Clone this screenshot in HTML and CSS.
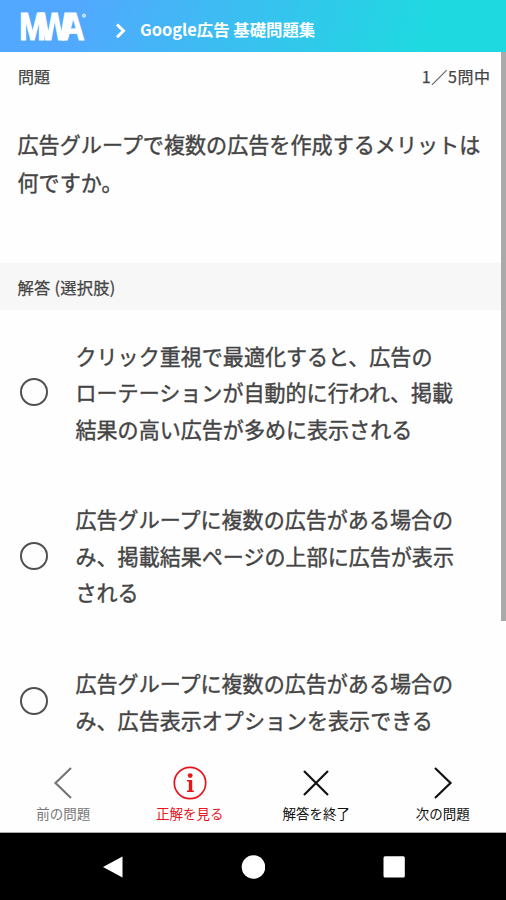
FILE: index.html
```html
<!DOCTYPE html>
<html lang="ja">
<head>
<meta charset="utf-8">
<title>Google広告 基礎問題集</title>
<link rel="stylesheet" href="styles.css">
</head>
<body>
<div class="app">
  <header class="header">
    <svg class="logo" width="68" height="32" viewBox="0 0 68 32" aria-label="MWA">
      <text class="logo-letter" transform="translate(-.8 30) scale(.83 1)">MWA</text>
      <circle class="logo-mark" cx="64" cy="5.6" r="1.6"/>
    </svg>
    <svg class="crumb" width="12" height="16" viewBox="0 0 12 16"><path d="M2 1.5 8.5 7.8 2 14.2"/></svg>
    <h1 class="title">Google広告 基礎問題集</h1>
  </header>
  <main class="content">
    <div class="status"><span>問題</span><span class="count">1／5問中</span></div>
    <p class="question">広告グループで複数の広告を作成するメリットは<br>何ですか。</p>
    <h2 class="section">解答 (選択肢)</h2>
    <ul class="options">
      <li class="option"><span class="radio"></span><span>クリック重視で最適化すると、広告の<br>ローテーションが自動的に行われ、掲載<br>結果の高い広告が多めに表示される</span></li>
      <li class="option"><span class="radio"></span><span>広告グループに複数の広告がある場合の<br>み、掲載結果ページの上部に広告が表示<br>される</span></li>
      <li class="option"><span class="radio"></span><span>広告グループに複数の広告がある場合の<br>み、広告表示オプションを表示できる</span></li>
    </ul>
    <div class="scrollbar"></div>
  </main>
  <footer class="toolbar">
    <div class="tool muted">
      <svg width="34" height="34" viewBox="0 0 34 34"><path d="M25 2 9.5 17 25 32"/></svg><span>前の問題</span>
    </div>
    <div class="tool alert">
      <svg width="34" height="34" viewBox="0 0 34 34"><circle cx="17" cy="17" r="15.7"/><circle class="fill" cx="17.2" cy="9.6" r="2.4"/><path class="fill" d="M14 14h5.2v10.4h1.6v1.5h-6.8v-1.5h1.8v-8.9h-1.8z"/></svg><span>正解を見る</span>
    </div>
    <div class="tool">
      <svg width="34" height="34" viewBox="0 0 34 34"><path d="M5 5 29 29M29 5 5 29"/></svg><span>解答を終了</span>
    </div>
    <div class="tool">
      <svg width="34" height="34" viewBox="0 0 34 34"><path d="M9 2 24.5 17 9 32"/></svg><span>次の問題</span>
    </div>
  </footer>
  <nav class="system">
    <svg width="24" height="24" viewBox="0 0 24 24"><path d="M3 12 22.5 1.5v21z"/></svg>
    <svg width="24" height="24" viewBox="0 0 24 24"><circle cx="12.5" cy="12" r="11.8"/></svg>
    <svg width="24" height="24" viewBox="0 0 24 24"><rect x="1.5" y="1.3" width="21.3" height="21.3" rx="1.5"/></svg>
  </nav>
</div>
</body>
</html>
```

FILE: styles.css
```css
* { box-sizing: border-box; margin: 0; padding: 0; }
body {
  font-family: "Noto Sans CJK JP", "Noto Sans", sans-serif;
  color: #444;
  background: #fefefe;
  overflow: hidden;
}
.app { display: flex; flex-direction: column; width: 506px; height: 900px; }
.header {
  flex: none;
  display: flex;
  align-items: center;
  height: 52px;
  padding: 4px 0 0 20px;
  background: linear-gradient(110deg, #52a8ff 15%, #1edae0 85%);
}
.logo { overflow: visible; margin-top: -4px; }
.logo-letter { font: 700 38px "Liberation Sans", sans-serif; letter-spacing: -7px; fill: #fff; stroke: #fff; stroke-width: 1.2px; }
.logo-mark { fill: #fff; fill-opacity: .5; stroke: #fff; stroke-opacity: .75; stroke-width: 1; }
.crumb { margin: 5px 0 0 27px; fill: none; stroke: #fff; stroke-width: 3; }
.title { margin: 1px 0 0 13px; font-size: 16.4px; line-height: 24px; font-weight: 700; color: #fff; white-space: nowrap; }
.content { position: relative; flex: 1; min-height: 0; overflow: hidden; }
.status {
  display: flex;
  justify-content: space-between;
  height: 46px;
  padding: 0 16px 0 18px;
  font-size: 16px;
  line-height: 48px;
  -webkit-text-stroke: .25px currentColor;
}
.count { letter-spacing: .6px; margin-right: -.6px; }
.question {
  height: 165px;
  padding: 28px 0 0 17.5px;
  font-size: 21.1px;
  line-height: 37.5px;
  white-space: nowrap;
  -webkit-text-stroke: .4px currentColor;
}
.section {
  height: 47px;
  padding-left: 17.5px;
  background: #f7f7f7;
  font-size: 16.3px;
  letter-spacing: .25px;
  font-weight: 400;
  line-height: 49px;
  -webkit-text-stroke: .25px currentColor;
}
.options { list-style: none; }
.option {
  display: flex;
  align-items: center;
  gap: 27.5px;
  padding: 27.6px 0 26.8px 20px;
  font-size: 21.05px;
  line-height: 36.5px;
  white-space: nowrap;
  -webkit-text-stroke: .4px currentColor;
}
.radio { flex: none; width: 28px; height: 28px; margin-top: -1px; border: 2px solid #505050; border-radius: 50%; }
.scrollbar { position: absolute; top: 0; right: 0; width: 5px; height: 569px; background: #aaa; }
.toolbar { flex: none; display: grid; grid-template-columns: repeat(4, 1fr); height: 83px; border-bottom: 1px solid #aaa; background: #fefefe; }
.tool {
  display: flex;
  flex-direction: column;
  align-items: center;
  padding-top: 16px;
  color: #111;
  font-size: 13.5px;
  line-height: 27px;
}
.tool svg { flex: none; fill: none; stroke: currentColor; stroke-width: 2.2; }
.tool svg circle { stroke-width: 1.7; }
.tool svg .fill { fill: currentColor; stroke: none; }
.muted { color: #777; }
.alert { color: #e8141c; }
.system { flex: none; display: flex; justify-content: center; gap: 117px; height: 67px; padding-top: 22px; background: #000; }
.system svg { fill: #fff; }
```
